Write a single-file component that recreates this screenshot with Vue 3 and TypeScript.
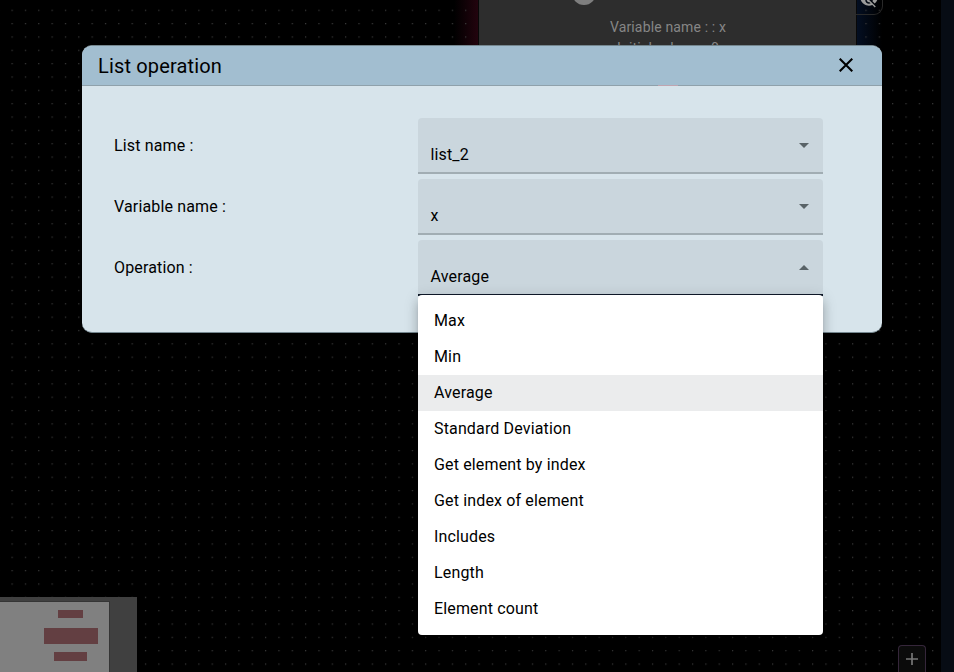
<script setup lang="ts">
interface Field {
  label: string
  value: string
  open: boolean
}

const fields: Field[] = [
  { label: 'List name :', value: 'list_2', open: false },
  { label: 'Variable name :', value: 'x', open: false },
  { label: 'Operation :', value: 'Average', open: true },
]

const operations: string[] = [
  'Max',
  'Min',
  'Average',
  'Standard Deviation',
  'Get element by index',
  'Get index of element',
  'Includes',
  'Length',
  'Element count',
]
</script>

<template>
  <main class="editor">
    <div class="glow glow-left"></div>
    <div class="glow glow-right"></div>
    <svg class="grid-dots" aria-hidden="true">
      <defs>
        <pattern id="dots" x="11.5" y="9.7" width="13.342" height="13.342" patternUnits="userSpaceOnUse">
          <rect width="1.2" height="1.2" fill="#3b3b3b" />
        </pattern>
      </defs>
      <rect width="941" height="672" fill="url(#dots)" />
    </svg>
    <div class="rail"></div>

    <section class="node">
      <div class="node-badge"></div>
      <div class="node-body">
        <span>Variable name : : x</span>
        <span>Initial value &nbsp;&nbsp; : 0</span>
      </div>
    </section>
    <div class="hide-button">
      <svg viewBox="0 0 24 24" width="18" height="18" aria-hidden="true">
        <path
          fill="#9b9b9b"
          d="M12 7c2.76 0 5 2.24 5 5 0 .65-.13 1.26-.36 1.83l2.92 2.92c1.51-1.26 2.7-2.89 3.43-4.75-1.73-4.39-6-7.5-11-7.5-1.4 0-2.74.25-3.98.7l2.16 2.16C10.74 7.13 11.35 7 12 7zM2 4.27l2.28 2.28.46.46C3.08 8.3 1.78 10.02 1 12c1.73 4.39 6 7.5 11 7.5 1.55 0 3.03-.3 4.38-.84l.42.42L19.73 22 21 20.73 3.27 3 2 4.27zM7.53 9.8l1.55 1.55c-.05.21-.08.43-.08.65 0 1.66 1.34 3 3 3 .22 0 .44-.03.65-.08l1.55 1.55c-.67.33-1.41.53-2.2.53-2.76 0-5-2.24-5-5 0-.79.2-1.53.53-2.2zm4.31-.78l3.15 3.15.02-.16c0-1.66-1.34-3-3-3l-.17.01z"
        />
      </svg>
    </div>

    <div class="minimap">
      <svg width="137" height="75" aria-hidden="true">
        <rect width="137" height="75" fill="#404040" />
        <rect x="-2" y="4.5" width="111.5" height="72" fill="#808080" stroke="#353535" stroke-width="1" />
        <g fill="#633f42">
          <rect x="58" y="13" width="25" height="8" />
          <rect x="44" y="31" width="54" height="16" />
          <rect x="54" y="55" width="33" height="9" />
        </g>
      </svg>
    </div>

    <button class="zoom-in" aria-label="+">
      <svg width="14" height="14" viewBox="0 0 14 14" aria-hidden="true">
        <path d="M1 7h12M7 1v12" stroke="#777" stroke-width="1.7" />
      </svg>
    </button>

    <section class="dialog" role="dialog">
      <header class="dialog-header">
        <h2>List operation</h2>
        <svg class="close" width="14" height="14" viewBox="0 0 14 14" aria-hidden="true">
          <path d="M.7.7l12.6 12.6M13.3.7L.7 13.3" stroke="#000" stroke-width="2.1" />
        </svg>
      </header>
      <div class="dialog-body">
        <div v-for="field in fields" :key="field.label" class="row">
          <label>{{ field.label }}</label>
          <div class="select" :class="{ open: field.open }">
            <span>{{ field.value }}</span>
            <svg class="arrow" width="10" height="5" viewBox="0 0 10 5" aria-hidden="true">
              <path d="M0 0h10L5 5z" fill="#596367" />
            </svg>
          </div>
        </div>
      </div>
      <i class="marker"></i>
    </section>

    <ul class="menu">
      <li v-for="operation in operations" :key="operation" :class="{ selected: operation === 'Average' }">
        {{ operation }}
      </li>
    </ul>
  </main>
</template>

<style>
body {
  background: #000;
}
</style>

<style scoped>
.editor {
  position: relative;
  width: 954px;
  height: 672px;
  overflow: hidden;
  background: #000;
  font-family: Roboto, 'Liberation Sans', sans-serif;
  font-size: 16px;
  color: #000;
}
.grid-dots {
  position: absolute;
  inset: 0;
  width: 941px;
  height: 672px;
}
.rail {
  position: absolute;
  top: 0;
  right: 0;
  width: 13px;
  height: 672px;
  background: #070c14;
}
.node {
  position: absolute;
  left: 479px;
  top: 0;
  width: 377px;
  height: 60px;
  background: #2d2d2d;
  box-shadow: 0 0 0 1px #080808;
}
.node-badge {
  position: absolute;
  left: 93px;
  top: -19px;
  width: 24px;
  height: 24px;
  border-radius: 12px;
  background: #7e7e7e;
}
.node-body {
  display: flex;
  flex-direction: column;
  align-items: center;
  padding: 17px 0 0 1px;
  font-size: 14px;
  line-height: 21px;
  letter-spacing: 0.15px;
  color: #868686;
  white-space: nowrap;
}
.glow {
  position: absolute;
  top: 0;
  width: 25px;
  height: 60px;
}
.glow-left {
  left: 454px;
  background: linear-gradient(to right, rgba(36, 4, 14, 0), rgba(40, 4, 16, 0.9));
}
.glow-right {
  left: 857px;
  background: linear-gradient(to right, rgba(4, 17, 40, 0.85), rgba(4, 17, 40, 0));
}
.hide-button {
  position: absolute;
  left: 856px;
  top: -13px;
  width: 26px;
  height: 26px;
  border: 1px solid #292929;
  border-left: 0;
  border-radius: 0 0 9px 0;
}
.hide-button svg {
  display: block;
  margin: 3px 0 0 4px;
}
.minimap {
  position: absolute;
  left: 0;
  bottom: 0;
  width: 137px;
  height: 75px;
}
.minimap svg {
  display: block;
}
.zoom-in {
  position: absolute;
  left: 898px;
  top: 645px;
  display: flex;
  justify-content: center;
  align-items: center;
  box-sizing: border-box;
  width: 28px;
  height: 28px;
  padding: 0;
  border: 1px solid #35263a;
  border-radius: 4px 4px 0 0;
  border-bottom-color: #0b0b0b;
  background: #0b0b0b;
}
.dialog {
  position: absolute;
  left: 82px;
  top: 45px;
  width: 800px;
  height: 287.6px;
  box-sizing: border-box;
  border-radius: 10px;
  overflow: hidden;
  background: #d7e4eb;
  border-top: 1px solid #75878f;
  border-bottom: 1px solid #75878f;
}
.dialog-header {
  display: flex;
  align-items: center;
  justify-content: space-between;
  height: 39px;
  padding: 0 29px 0 16px;
  background: #a2bed0;
  border-bottom: 1px solid #8fa1ab;
}
.dialog-header h2 {
  margin: 0;
  font-size: 20px;
  font-weight: 400;
  line-height: 32px;
  letter-spacing: 0.15px;
}
.close {
  margin-bottom: 1px;
}
.marker {
  position: absolute;
  left: 576px;
  top: 39px;
  width: 20px;
  height: 1px;
  background: #c0a5b0;
}
.dialog-body {
  display: grid;
  gap: 5px;
  padding: 32px 59px 0 32px;
}
.row {
  display: grid;
  grid-template-columns: 304px 405px;
  align-items: center;
  height: 56px;
  letter-spacing: 0.15px;
}
.row label {
  padding-bottom: 2px;
}
.select {
  display: flex;
  align-items: center;
  justify-content: space-between;
  box-sizing: border-box;
  height: 56px;
  padding: 0 14px 0 12.5px;
  border-radius: 4px 4px 0 0;
  border-bottom: 2px solid #a1adb3;
  background: #cad6dd;
}
.select span {
  padding-top: 19px;
}
.select.open {
  border-bottom-color: #101a2a;
}
.arrow {
  margin-top: 1px;
}
.open .arrow {
  margin-top: 0;
  transform: rotate(180deg);
}
.menu {
  position: absolute;
  left: 418px;
  top: 295px;
  width: 405px;
  box-sizing: border-box;
  margin: 0;
  padding: 8px 0;
  list-style: none;
  border-radius: 4px;
  background: #fff;
  box-shadow:
    0 5px 5px -3px rgba(0, 0, 0, 0.2),
    0 8px 10px 1px rgba(0, 0, 0, 0.14),
    0 3px 14px 2px rgba(0, 0, 0, 0.12);
}
.menu li {
  height: 36px;
  padding: 0 16px;
  line-height: 36px;
  letter-spacing: 0.15px;
}
.menu .selected {
  background: #ebeced;
}
</style>
